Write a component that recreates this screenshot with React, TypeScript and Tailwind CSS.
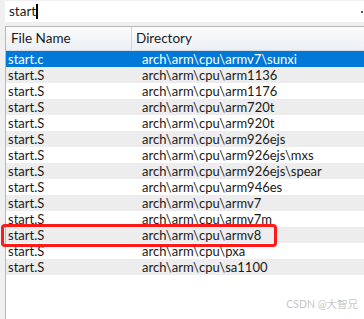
import React from 'react';

const dirs = [
  'arch\\arm\\cpu\\armv7\\sunxi',
  'arch\\arm\\cpu\\arm1136',
  'arch\\arm\\cpu\\arm1176',
  'arch\\arm\\cpu\\arm720t',
  'arch\\arm\\cpu\\arm920t',
  'arch\\arm\\cpu\\arm926ejs',
  'arch\\arm\\cpu\\arm926ejs\\mxs',
  'arch\\arm\\cpu\\arm926ejs\\spear',
  'arch\\arm\\cpu\\arm946es',
  'arch\\arm\\cpu\\armv7',
  'arch\\arm\\cpu\\armv7m',
  'arch\\arm\\cpu\\armv8',
  'arch\\arm\\cpu\\pxa',
  'arch\\arm\\cpu\\sa1100',
];

export default function App() {
  return (
    <div
      className="relative w-[364px] h-[319px] overflow-hidden bg-[#f0f0f0] flex flex-col text-[13px] text-[#1a1a1a]"
      style={{ fontFamily: 'Lato, "Noto Sans", "Noto Sans CJK SC", sans-serif' }}
    >
      {/* search box */}
      <div className="mt-px ml-[5px] h-[21px] bg-white flex items-center pl-[4px] relative text-[13.5px]">
        <span className="leading-none">start</span>
        <span className="w-[2px] h-[15px] bg-black"></span>
        <span className="absolute right-[1px] top-[10px] w-[2px] h-[2px] bg-[#555]"></span>
      </div>

      {/* file list */}
      <div className="mt-[4px] ml-[5px] flex-1 bg-white border-l border-t border-[#b8b8b8] flex flex-col">
        <div className="h-[24px] flex bg-gradient-to-b from-[#fbfcfd] to-[#eceff4] border-b border-[#d5dbe3] text-[13.5px]">
          <div className="w-[126px] border-r border-[#cfd5dd] flex items-center pl-[5px]">File Name</div>
          <div className="flex-1 flex items-center pl-[4px]">Directory</div>
        </div>
        <div className="flex flex-col">
          {dirs.map((d, i) => (
            <div
              key={i}
              className={
                'h-[16px] flex items-center leading-none ' +
                (i === 0 ? 'bg-[#0078d7] text-white' : i % 2 === 1 ? 'bg-[#ededed]' : 'bg-white')
              }
            >
              <div className="w-[136px] pl-[2px]">{i === 0 ? 'start.c' : 'start.S'}</div>
              <div className="flex-1">{d}</div>
            </div>
          ))}
        </div>
      </div>

      {/* red highlight */}
      <div className="absolute left-[1px] top-[224px] w-[276px] h-[23px] border-[3px] border-[#ff1a1a] rounded-[4px]"></div>

      {/* watermark */}
      <div className="absolute right-[6px] bottom-[10px] text-[10.5px] text-[#c8c8c8] leading-none">CSDN @大智兄</div>
    </div>
  );
}
